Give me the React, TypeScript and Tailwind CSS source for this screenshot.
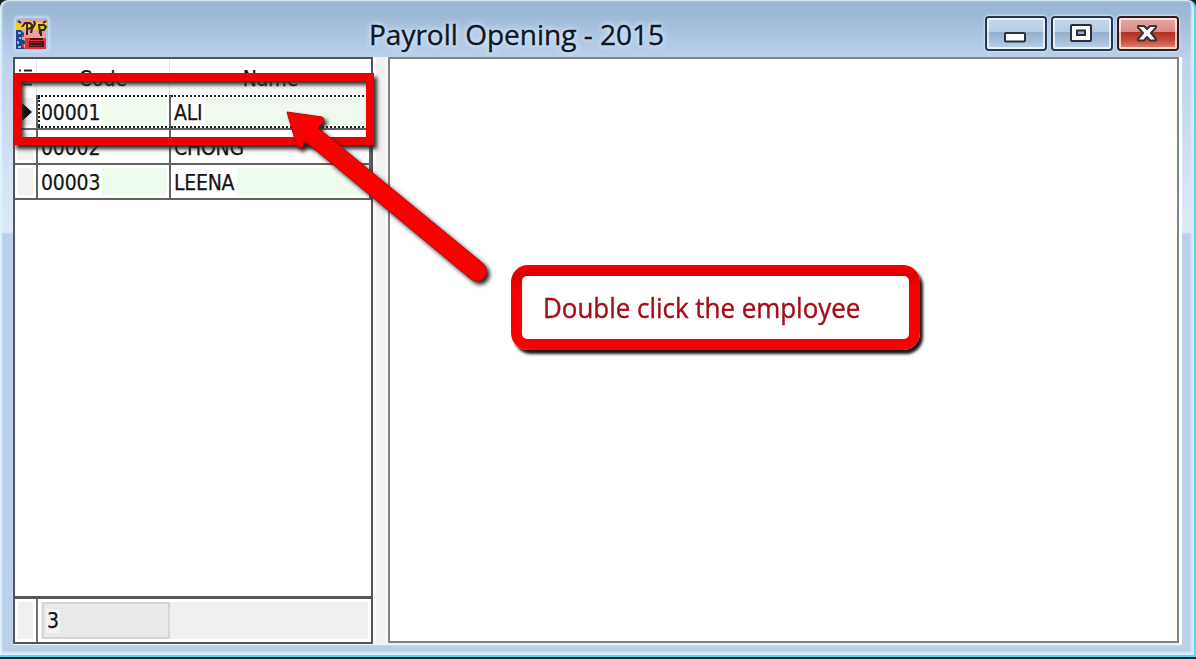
import React from "react";

const employees = [
  { code: "00001", name: "ALI" },
  { code: "00002", name: "CHONG" },
  { code: "00003", name: "LEENA" },
];

const gridFont = "font-['DejaVu_Sans_Condensed','DejaVu_Sans',sans-serif] [font-stretch:condensed]";

function AppIcon() {
  return (
    <svg className="h-[32px] w-[32px]" viewBox="0 0 32 32">
      <path fill="#e9a0a0" d="M1 1h29v30H1z" />
      <path fill="#d8323a" d="M9 20h21v11H9z" />
      <path fill="#f6cf1c" d="M0 6L3 4L6 6L9 3L12 5L15 4L18 7L21 4L24 5L27 3L31 4V10L29 13L26 11L23 13L20 11L17 13L14 11L11 13L8 11L5 13L0 12Z" />
      <path fill="#20448d" d="M0 12h5l3 3v3l-3 2 4 3v3l-3 1 3 4H0z" />
      <path fill="#86b7ed" d="M2 14h3v2H2zm1 5h2v2H3zm-2 4h2v3H1zm5-3h2v2H6zM2 28h3v2H2z" />
      <path fill="#d63544" d="M6 17h2v2H6zM6 26h2v3H6z" />
      <path d="M2 3L5 5M6 9L9 5H14L16 7L15 10L12 11M11 6V17M18 3L19 6L16 11L15 15M22 7H28L30 9L28 12H25V18M23 6L24 16M27 5L30 3" fill="none" stroke="#35251f" strokeWidth="2" />
      <path fill="#4c101b" d="M14 20h13v2H14zM13 23h15v6H13z" />
      <path fill="#a11e2b" d="M14 24h12v1H14zM14 27h12v1H14z" />
    </svg>
  );
}

function CaptionButton({ kind }: { kind: "min" | "max" | "close" }) {
  const close = kind === "close";
  return (
    <button
      aria-label={kind}
      className={
        "flex h-[35px] w-[62px] items-center justify-center rounded-[4px] border-2 shadow-[0_0_2px_1px_#cfe1f6] " +
        (close
          ? "border-[#35181b] bg-[linear-gradient(#e5aaa4_0%,#dc8b83_44%,#b52e26_46%,#c74b37_72%,#df8b80_100%)]"
          : "border-[#27364d] bg-[linear-gradient(#c4d6eb_0%,#b7cde5_44%,#91aecd_46%,#a5bfdb_75%,#bfd5ed_100%)]")
      }
    >
      <span className="flex h-[31px] w-[58px] items-center justify-center rounded-[2px] border-2 border-[#ffffffb0]">
        {kind === "min" && (
          <svg width="24" height="20" viewBox="0 0 24 20">
            <rect x="1" y="9" width="20" height="8.5" rx="1" fill="#fff" stroke="#29303a" strokeWidth="2" />
          </svg>
        )}
        {kind === "max" && (
          <svg width="24" height="20" viewBox="0 0 24 20">
            <rect x="1" y="1" width="20" height="16" rx="1" fill="#fff" stroke="#29303a" strokeWidth="2" />
            <rect x="7" y="6.5" width="8" height="4.5" fill="#8fb0d2" stroke="#29303a" strokeWidth="2" />
          </svg>
        )}
        {close && (
          <svg width="24" height="20" viewBox="0 0 24 20">
            <path
              d="M2 2H8L11 5L14 2H20V3.5L15 9L20 15V16.5H14L11 13L8 16.5H2V15L7 9L2 3.5Z"
              fill="#fff"
              stroke="#3a3036"
              strokeWidth="2"
              strokeLinejoin="round"
            />
          </svg>
        )}
      </span>
    </button>
  );
}

function EmployeeGrid() {
  return (
    <section className={"flex h-[587px] w-[360px] shrink-0 flex-col border-2 border-[#50545b] bg-white text-[21px] text-[#151515] [-webkit-text-stroke:0.25px_#151515] " + gridFont}>
      <div className="flex h-[36px] shrink-0">
        <div className="flex w-[22px] justify-center border-r border-[#e1e9f2] pt-[10px]">
          <svg width="14" height="18" viewBox="0 0 14 18">
            <path d="M0 1.5H2M5 1.5H13M1 6V16M5 8.5H13M4 15.5H13" stroke="#222" strokeWidth="1.9" />
          </svg>
        </div>
        <div className="w-[133px] border-r border-[#dce8f3] pt-[7px] text-center leading-[26px]">Code</div>
        <div className="flex-1 pt-[7px] text-center leading-[26px]">Name</div>
      </div>
      {employees.map((employee, index) => (
        <div key={employee.code} className="flex h-[35px] shrink-0 border-b-2 border-[#626262]">
          <div className="flex w-[23px] shrink-0 items-center border-r-2 border-[#626262] bg-[#f1f1f1] pl-[6px] shadow-[inset_0_0_0_3px_#fff]">
            {index === 0 && (
              <svg width="12" height="20" viewBox="0 0 12 20">
                <path d="M1 1L11 10L1 19Z" fill="#080808" />
              </svg>
            )}
          </div>
          <div className={"flex w-[133px] shrink-0 items-center border-r-2 border-[#626262] " + (index === 0 ? "border-y-2 border-y-[#222] [border-top-style:dotted] [border-bottom-style:dotted]" : "py-[2px]")}>
            <span className={"h-full w-[64px] bg-white leading-[32px] tracking-[-0.15px] " + (index === 0 ? "border-l-2 border-dotted border-[#222] pl-[1px]" : "pl-[3px]")}>{employee.code}</span>
            <span className={index === 1 ? "flex-1" : "mr-[3px] h-[27px] flex-1 bg-[#edfced]"} />
          </div>
          <div className={"flex min-w-0 flex-1 items-center " + (index === 0 ? "border-y-2 border-dotted border-[#222]" : "border-r-2 border-[#626262] py-[2px]")}>
            <span className="h-full bg-white px-[3px] leading-[32px] tracking-[-0.25px]">{employee.name}</span>
            <span className={index === 1 ? "flex-1" : "mr-[5px] h-[27px] flex-1 bg-[#edfced]"} />
          </div>
        </div>
      ))}
      <div className="flex-1" />
      <footer className="flex h-[46px] shrink-0 border-t-[3px] border-[#55565a] bg-[#f0f0f0]">
        <div className="w-[23px] border-r-2 border-[#747474] shadow-[inset_0_0_0_3px_#fff]" />
        <div className="flex flex-1 py-[3px] pl-[4px] shadow-[inset_0_0_0_3px_#fff]">
          <div className="flex h-[37px] w-[128px] items-center border-2 border-[#d3d5d7] bg-[#e7e9eb] pl-[2px] pt-[1px]">
            <span className="bg-[#f2f3f4] px-[1px] leading-[24px]">3</span>
          </div>
        </div>
      </footer>
    </section>
  );
}

export default function App() {
  return (
    <main className="relative flex h-[659px] w-[1196px] flex-col overflow-hidden bg-[#1a1f22]">
      <div className="flex h-[657px] w-[1196px] flex-col rounded-t-[8px] border-r-2 border-b-2 border-t border-r-[#50dfea] border-b-[#50dfea] border-t-[#d6e4f2] bg-[linear-gradient(#9bb5d3_0px,#9fb9d7_14px,#b6cee8_52px,#bdd2eb_58px,#d6e4f4_180px,#dceaf7_231px,#b9cfea_233px,#bbd0ea_100%)] shadow-[inset_2px_0_2px_#e2f3ff,inset_-3px_-3px_2px_#d8eaff]">
        <header className="flex h-[56px] shrink-0 items-center pl-[16px] pr-[15px]">
          <div className="mt-[10px] rounded-[3px] shadow-[0_0_3px_2px_#c6dcf4]"><AppIcon /></div>
          <h1 className="flex-1 pl-[321px] pt-[10px] font-['Open_Sans','Noto_Sans',sans-serif] text-[28px] leading-[34px] text-[#111620] [-webkit-text-stroke:0.4px_#111620] [text-shadow:0_0_3px_#dcecff,0_0_6px_#d5e8fc,0_0_8px_#d5e8fc]">
            <span className="inline-block origin-left whitespace-nowrap">Payroll Opening - 2015</span>
          </h1>
          <div className="flex gap-[4px] pt-[9px]">
            <CaptionButton kind="min" />
            <CaptionButton kind="max" />
            <CaptionButton kind="close" />
          </div>
        </header>
        <div className="ml-[13px] flex h-[587px] w-[1169px] bg-[#f1f1f1] shadow-[0_1px_1px_#e8f2ff]">
          <EmployeeGrid />
          <div className="w-[15px] shrink-0 border-x-[3px] border-[#fafafa]" />
          <section className="h-[586px] w-[791px] border-2 border-[#828282] bg-white" />
          <div className="w-[3px] bg-white" />
        </div>
      </div>

      <div className="pointer-events-none absolute left-[13px] top-[73px] h-[72px] w-[361px] border-[8px] border-[#f00000] shadow-[3px_4px_4px_#292929,inset_3px_4px_4px_#303030]" />

      <svg className="pointer-events-none absolute left-[275px] top-[100px] [filter:drop-shadow(3px_3px_2px_#222)]" width="230" height="200" viewBox="275 100 230 200">
        <path
          d="M287 112L322 117Q326 119 322 123L318 128L483.500 264Q489 271 484 278Q478 284 471 279L305 141L302 147Q299 150 297 146Z"
          fill="#fb0000"
          stroke="#c90000"
          strokeWidth="1"
          strokeLinejoin="round"
        />
      </svg>

      <div className="absolute left-[511px] top-[265px] flex h-[85px] w-[409px] items-center rounded-[17px] bg-[linear-gradient(#fb0000_0px,#d80000_11px,#fb0000_25px,#fb0000_100%)] p-[11px] shadow-[3px_4px_3px_#171717]">
        <div className="flex h-[63px] w-full items-center rounded-[5px] bg-white pl-[21px]">
          <span className="origin-left scale-x-[0.96] whitespace-nowrap font-['Open_Sans','Noto_Sans',sans-serif] text-[27px] leading-[34px] text-[#a50e17] [-webkit-text-stroke:0.4px_#a50e17]">Double click the employee</span>
        </div>
      </div>
    </main>
  );
}
